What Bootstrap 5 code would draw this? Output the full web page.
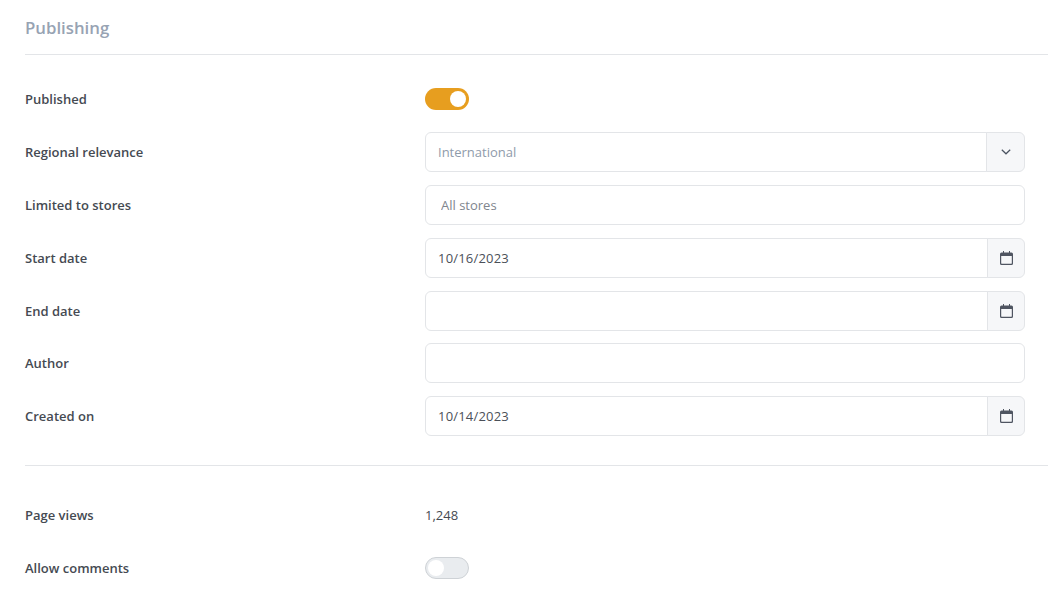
<!DOCTYPE html>
<html lang="en">

<head>
    <meta charset="UTF-8">
    <meta name="viewport" content="width=device-width, initial-scale=1.0">
    <title>Publishing</title>
    <link rel="stylesheet" href="https://cdn.jsdelivr.net/npm/bootstrap@5.3.0/dist/css/bootstrap.min.css">
    <style>
        body {
            font-family: "Open Sans", "Noto Sans", sans-serif;
            font-size: 13px;
            color: #454a52;
            background: #fff;
            overflow: hidden;
        }

        .pub-page {
            padding-left: 25px;
        }

        .pub-title {
            height: 55px;
            margin: 0;
            padding-top: 16px;
            font-size: 16.8px;
            font-weight: 600;
            line-height: 24px;
            color: #97a3b3;
            border-bottom: 1px solid #e3e5e8;
        }

        .pub-rows {
            padding-top: 24px;
            width: 1000px;
        }

        .pub-row {
            min-height: 40px;
            margin-bottom: 13px;
        }

        .pub-row-tight {
            margin-bottom: 12px;
        }

        .pub-label {
            width: 400px;
            flex: none;
            margin: 0;
            padding-top: 1px;
            font-weight: 600;
        }

        .pub-field {
            width: 600px;
            flex: none;
        }

        .pub-value {
            padding-top: 1px;
        }

        .pub-field .form-control,
        .pub-field .input-group-text {
            height: 40px;
            font-size: 13px;
            border-color: #e3e5e8;
            border-radius: 6px;
            color: #4b5058;
        }

        .pub-field .form-control {
            padding-left: 12px;
        }

        .pub-field .form-control.pub-date {
            letter-spacing: .2px;
        }

        .pub-field .form-control::placeholder {
            color: #8f9baa;
        }

        .pub-field .form-control.pub-stores {
            padding-left: 15px;
        }

        .pub-field .form-control.pub-stores::placeholder {
            color: #80868e;
        }

        .pub-field .input-group-text {
            width: 38px;
            padding: 0;
            justify-content: center;
            background: #f6f7f9;
        }

        .pub-field .input-group-text.pub-caret {
            width: 39px;
        }

        .pub-toggle {
            display: block;
            width: 44px;
            height: 22px;
            border-radius: 11px;
            position: relative;
        }

        .pub-toggle::after {
            content: "";
            position: absolute;
            top: 3px;
            width: 16px;
            height: 16px;
            border-radius: 50%;
            background: #fff;
        }

        .pub-toggle-on {
            background: #e79e1f;
        }

        .pub-toggle-on::after {
            left: 25px;
        }

        .pub-toggle-off {
            background: #e9ecef;
            border: 1px solid #ced2d6;
        }

        .pub-toggle-off::after {
            top: 2px;
            left: 2px;
        }

        .pub-rule {
            width: 1023px;
            height: 1px;
            margin: 29px 0 29px;
            background: #e3e5e8;
        }
    </style>
</head>

<body>
    <div class="pub-page">
        <h2 class="pub-title">Publishing</h2>

        <div class="pub-rows">
            <div class="pub-row d-flex align-items-center">
                <label class="pub-label">Published</label>
                <div class="pub-field"><span class="pub-toggle pub-toggle-on"></span></div>
            </div>
            <div class="pub-row d-flex align-items-center">
                <label class="pub-label">Regional relevance</label>
                <div class="pub-field input-group">
                    <input class="form-control" type="text" placeholder="International">
                    <span class="input-group-text pub-caret">
                        <svg width="10" height="6" viewBox="0 0 10 6" fill="none" stroke="#4a5361" stroke-width="1.2"><path d="M.8.8 5 4.8 9.2.8"/></svg>
                    </span>
                </div>
            </div>
            <div class="pub-row d-flex align-items-center">
                <label class="pub-label">Limited to stores</label>
                <div class="pub-field">
                    <input class="form-control pub-stores" type="text" placeholder="All stores">
                </div>
            </div>
            <div class="pub-row d-flex align-items-center">
                <label class="pub-label">Start date</label>
                <div class="pub-field input-group">
                    <input class="form-control pub-date" type="text" value="10/16/2023">
                    <span class="input-group-text">
                        <svg width="13" height="14" viewBox="0 0 13 14"><path fill="#4f5561" d="M3 0h1v2H3zM9 0h1v2H9zM1.5 1.500h10A1.500 1.500 0 0 1 13 3v9.500a1.500 1.500 0 0 1-1.500 1.500h-10A1.500 1.500 0 0 1 0 12.500V3a1.500 1.500 0 0 1 1.500-1.500zM1.200 5v7.300c0 .3.200.5.500.5h9.600c.3 0 .5-.2.500-.5V5z"/></svg>
                    </span>
                </div>
            </div>
            <div class="pub-row pub-row-tight d-flex align-items-center">
                <label class="pub-label">End date</label>
                <div class="pub-field input-group">
                    <input class="form-control pub-date" type="text">
                    <span class="input-group-text">
                        <svg width="13" height="14" viewBox="0 0 13 14"><path fill="#4f5561" d="M3 0h1v2H3zM9 0h1v2H9zM1.5 1.500h10A1.500 1.500 0 0 1 13 3v9.500a1.500 1.500 0 0 1-1.500 1.500h-10A1.500 1.500 0 0 1 0 12.500V3a1.500 1.500 0 0 1 1.500-1.500zM1.200 5v7.300c0 .3.200.5.500.5h9.600c.3 0 .5-.2.500-.5V5z"/></svg>
                    </span>
                </div>
            </div>
            <div class="pub-row d-flex align-items-center">
                <label class="pub-label">Author</label>
                <div class="pub-field">
                    <input class="form-control" type="text">
                </div>
            </div>
            <div class="pub-row d-flex align-items-center">
                <label class="pub-label">Created on</label>
                <div class="pub-field input-group">
                    <input class="form-control pub-date" type="text" value="10/14/2023">
                    <span class="input-group-text">
                        <svg width="13" height="14" viewBox="0 0 13 14"><path fill="#4f5561" d="M3 0h1v2H3zM9 0h1v2H9zM1.5 1.500h10A1.500 1.500 0 0 1 13 3v9.500a1.500 1.500 0 0 1-1.500 1.500h-10A1.500 1.500 0 0 1 0 12.500V3a1.500 1.500 0 0 1 1.500-1.500zM1.200 5v7.300c0 .3.200.5.500.5h9.600c.3 0 .5-.2.500-.5V5z"/></svg>
                    </span>
                </div>
            </div>
        </div>

        <div class="pub-rule"></div>

        <div class="pub-rows pt-0">
            <div class="pub-row d-flex align-items-center">
                <label class="pub-label">Page views</label>
                <div class="pub-field pub-value">1,248</div>
            </div>
            <div class="pub-row d-flex align-items-center">
                <label class="pub-label">Allow comments</label>
                <div class="pub-field"><span class="pub-toggle pub-toggle-off"></span></div>
            </div>
        </div>
    </div>
</body>

</html>
